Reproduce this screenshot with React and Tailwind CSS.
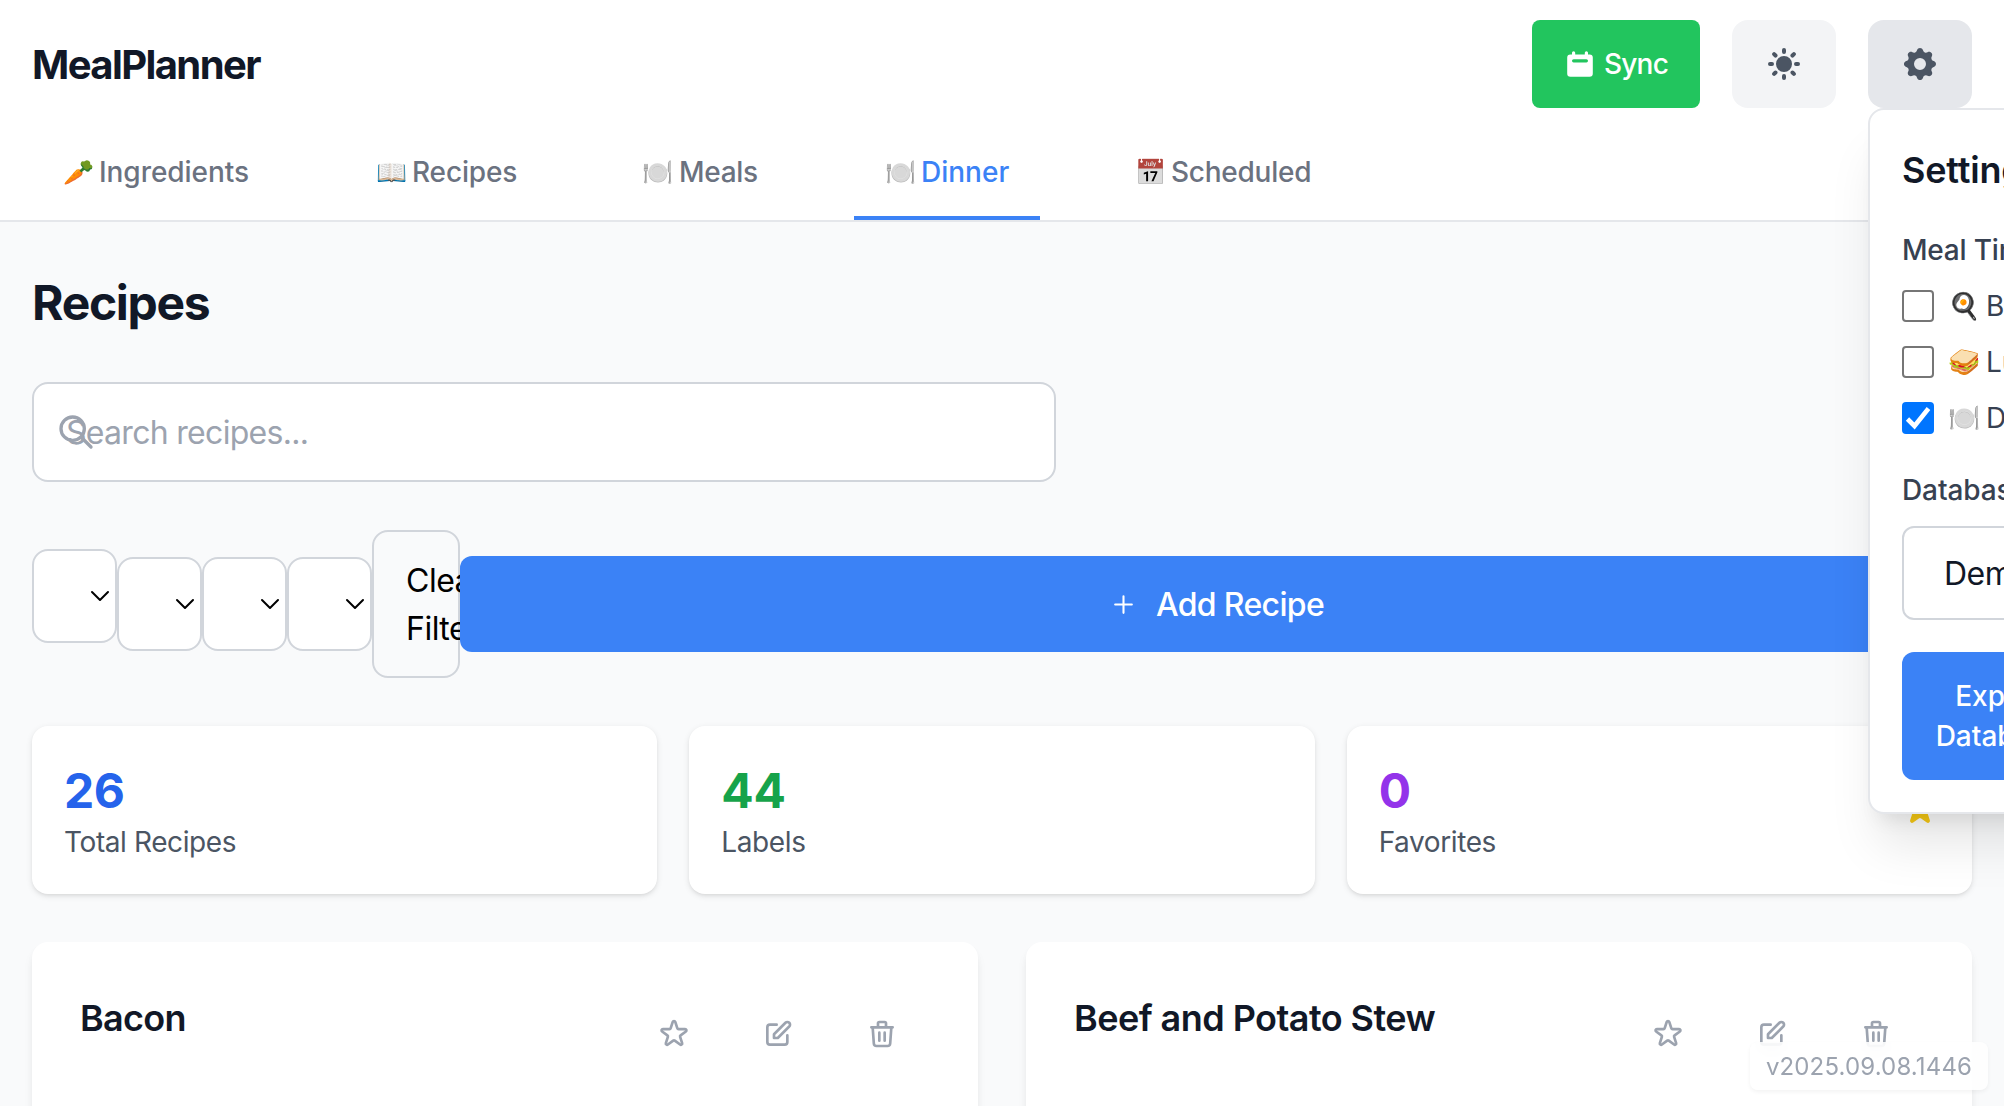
import { HiCalendar, HiSun, HiCog, HiStar, HiOutlineSearch, HiOutlinePlus, HiOutlineStar, HiOutlinePencilAlt, HiOutlineTrash } from "react-icons/hi";

const TABS = [
  { emoji: "🥕", label: "Ingredients", width: "w-[249px]", tracking: "tracking-[-0.05px] pl-px", tint: "" },
  { emoji: "📖", label: "Recipes", width: "w-[202px]", tracking: "tracking-[-0.15px] pl-px", tint: "hue-rotate-[200deg]" },
  { emoji: "🍽️", label: "Meals", width: "w-[179px]", tracking: "tracking-[-0.3px] pl-[2px]", tint: "brightness-[0.88] saturate-[0.7]" },
  { emoji: "🍽️", label: "Dinner", width: "w-[186px]", tracking: "pl-px", active: true, tint: "brightness-[0.88] saturate-[0.7]" },
  { emoji: "📅", label: "Scheduled", width: "w-[242px]", tracking: "tracking-[-0.25px] pl-px", tint: "brightness-[0.88] saturate-[0.7]" },
];

const MEAL_TIMES = [
  { emoji: "🍳", label: "Breakfast" },
  { emoji: "🥪", label: "Lunch" },
  { emoji: "🍽️", label: "Dinner", checked: true },
];

const STATS = [
  { value: 26, label: "Total Recipes", color: "text-[#2563eb]" },
  { value: 44, label: "Labels", color: "text-[#16a34a]" },
  { value: 0, label: "Favorites", color: "text-[#9333ea]", star: true },
];

function Emoji({ children, className = "" }) {
  return <span className={`inline-flex shrink-0 leading-10 ${className}`}>{children}</span>;
}

function Header() {
  return (
    <header className="h-[222px] shrink-0 border-b-2 border-[#e5e7eb] bg-white">
      <div className="flex h-32 items-center justify-between px-8">
        <h1 className="pt-[2px] text-[40px] font-bold leading-14 tracking-[-1.6px] text-[#111827]">MealPlanner</h1>
        <div className="flex gap-8">
          <button className="flex h-[88px] w-[168px] items-center gap-2 rounded-lg bg-[#22c55e] pl-8 text-white">
            <HiCalendar className="size-8" />
            <span className="text-[28px] font-medium leading-10 tracking-[-0.8px]">Sync</span>
          </button>
          <button className="flex h-[88px] w-[104px] items-center justify-center rounded-2xl bg-[#f3f4f6] text-[#4b5563]">
            <HiSun className="size-10" />
          </button>
          <button className="flex h-[88px] w-[104px] items-center justify-center rounded-2xl bg-[#e5e7eb] text-[#4b5563]">
            <HiCog className="size-10" />
          </button>
        </div>
      </div>
      <nav className="flex h-[92px] gap-16 px-8">
        {TABS.map((t) => (
          <a
            key={t.label}
            className={`flex h-full items-start whitespace-nowrap border-b-4 px-8 pt-6 text-[28px] font-medium leading-10 ${t.width} ${t.active ? "border-[#3b82f6] text-[#3b82f6]" : "border-transparent text-[#6b7280]"}`}
          >
            <Emoji className={`-ml-px w-[35px] text-[25px] ${t.tint}`}>{t.emoji}</Emoji>
            <span className={t.tracking}>{t.label}</span>
          </a>
        ))}
      </nav>
    </header>
  );
}

function FilterSelect({ className = "" }) {
  return (
    <div className={`flex h-[94px] w-[85px] shrink-0 items-center justify-end rounded-2xl border-2 border-[#d1d5db] bg-white pr-[5px] ${className}`}>
      <svg className="h-3 w-5" viewBox="0 0 20 12" fill="none" stroke="#000" strokeWidth="2" strokeLinecap="round" strokeLinejoin="round">
        <path d="M2 2l8 8 8-8" />
      </svg>
    </div>
  );
}

function Toolbar() {
  return (
    <div className="mt-12 flex h-[148px] items-center">
      <FilterSelect className="mb-4" />
      <FilterSelect />
      <FilterSelect />
      <FilterSelect />
      <button className="h-[148px] w-[88px] shrink-0 rounded-2xl border-2 border-[#d1d5db] pl-8 pt-[2px] text-left text-[32px] leading-12 tracking-[-0.5px] text-black">
        Clear Filters
      </button>
      <button className="relative flex h-24 grow items-center justify-center gap-4 rounded-xl bg-[#3b82f6] text-white">
        <HiOutlinePlus className="mx-[3.5px] size-[25px]" />
        <span className="pt-[2px] text-[32px] font-medium leading-12 tracking-[-0.65px]">Add Recipe</span>
      </button>
    </div>
  );
}

function StatCard({ value, label, color, star }) {
  return (
    <div className="flex h-[168px] items-center justify-between rounded-2xl bg-white px-8 shadow-[0_2px_6px_rgba(0,0,0,0.1),0_2px_4px_-2px_rgba(0,0,0,0.1)]">
      <div>
        <div className={`h-16 pt-px text-[48px] font-bold leading-16 tracking-[-0.4px] ${color}`}>{value}</div>
        <div className="text-[28px] leading-10 tracking-[-0.4px] text-[#4b5563]">{label}</div>
      </div>
      {star && <HiStar className="size-10 text-[#facc15]" />}
    </div>
  );
}

function RecipeCard({ title, tracking }) {
  return (
    <div className="flex h-[400px] items-start justify-between rounded-2xl bg-white p-12 shadow-[0_8px_12px_-2px_rgba(0,0,0,0.08),0_4px_8px_-4px_rgba(0,0,0,0.1)]">
      <h3 className={`text-[36px] font-semibold leading-14 text-[#111827] ${tracking}`}>{title}</h3>
      <div className="flex gap-2 text-[#9ca3af]">
        {[HiOutlineStar, HiOutlinePencilAlt, HiOutlineTrash].map((Icon, i) => (
          <button key={i} className="flex h-[88px] w-24 items-center justify-center">
            <Icon className="size-8" />
          </button>
        ))}
      </div>
    </div>
  );
}

function SettingsPanel() {
  return (
    <div className="absolute left-[1868px] top-[108px] h-[706px] w-[640px] rounded-2xl border-2 border-[#e5e7eb] bg-white p-8 shadow-[0_40px_50px_-10px_rgba(0,0,0,0.1),0_16px_20px_-12px_rgba(0,0,0,0.1)]">
      <h2 className="text-[36px] font-semibold leading-14 tracking-[-0.2px] text-[#111827]">Settings</h2>
      <div className="mt-8 text-[28px] font-medium leading-10 tracking-[-0.2px] text-[#374151]">Meal Times</div>
      <div className="mt-4 flex flex-col gap-4">
        {MEAL_TIMES.map((m) => (
          <label key={m.label} className="flex h-10 items-center text-[28px] leading-10 text-[#374151]">
            <span className={`mr-[14px] flex size-8 items-center justify-center rounded-[4px] ${m.checked ? "bg-[#0075ff]" : "border-2 border-[#767676] bg-white"}`}>
              {m.checked && (
                <svg className="size-8" viewBox="0 0 32 32" fill="none" stroke="#fff" strokeWidth="4.6">
                  <path d="M5.5 17l7 7L26.5 6.5" />
                </svg>
              )}
            </span>
            <Emoji className={`w-[38px] text-[26px] ${m.checked ? "brightness-[0.88]" : ""}`}>{m.emoji}</Emoji>
            {m.label}
          </label>
        ))}
      </div>
      <div className="mt-8 text-[28px] font-medium leading-10 tracking-[-0.1px] text-[#374151]">Database</div>
      <div className="mt-4 flex h-[94px] items-center rounded-xl border-2 border-[#d1d5db] pl-[40px] pt-[2px] text-[32px] tracking-[-0.5px] text-[#111827]">Demo</div>
      <button className="mt-8 h-32 w-[194px] rounded-xl bg-[#3b82f6] px-8 text-center text-[28px] font-medium leading-10 text-white">
        Export Database
      </button>
    </div>
  );
}

export default function App() {
  return (
    <div className="relative flex h-[1106px] w-full flex-col overflow-hidden bg-[#f9fafb] font-[Inter,'Noto_Color_Emoji',sans-serif]">
      <Header />
      <main className="flex flex-col px-8 pt-12">
        <h2 className="h-16 pt-px text-[48px] font-bold leading-16 tracking-[-1.3px] text-[#111827]">Recipes</h2>
        <div className="relative mt-12 flex h-[100px] w-[1024px] items-center rounded-2xl border-2 border-[#d1d5db] bg-white pl-8">
          <HiOutlineSearch className="absolute left-[22px] size-10 text-[#9ca3af]" />
          <span className="pt-[2px] text-[32px] leading-12 tracking-[-0.7px] text-[#9ca3af]">Search recipes...</span>
        </div>
        <Toolbar />
        <div className="mt-12 grid grid-cols-3 gap-8">
          {STATS.map((s) => <StatCard key={s.label} {...s} />)}
        </div>
        <div className="mt-12 grid grid-cols-2 gap-12">
          <RecipeCard title="Bacon" tracking="tracking-[-0.7px]" />
          <RecipeCard title="Beef and Potato Stew" tracking="tracking-[-0.55px]" />
        </div>
      </main>
      <SettingsPanel />
      <div className="absolute bottom-4 right-4 flex h-12 w-[238px] items-center justify-center rounded-lg bg-white/80 pt-[2px] text-[24px] tracking-[0.15px] text-[#9ca3af] shadow-[0_2px_4px_rgba(0,0,0,0.05)] backdrop-blur-sm">
        v2025.09.08.1446
      </div>
    </div>
  );
}
